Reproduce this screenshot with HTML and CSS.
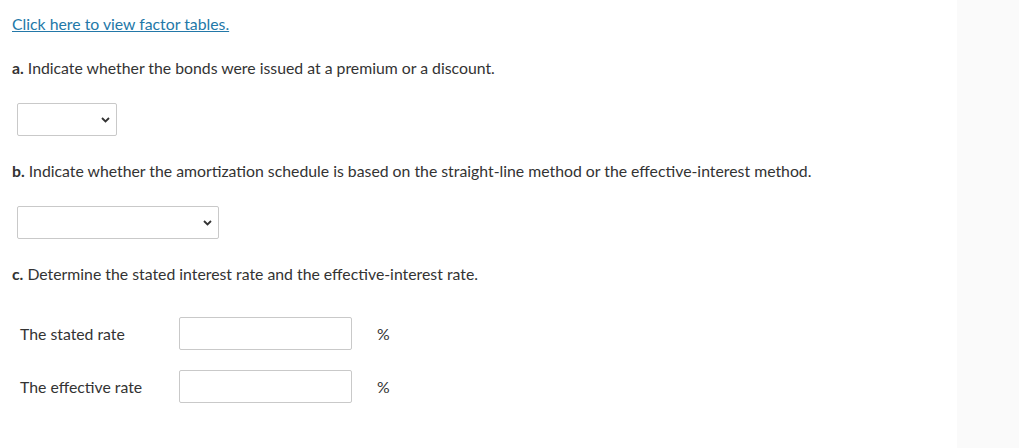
FILE: index.html
```html
<!DOCTYPE html>
<html>
<head>
<meta charset="utf-8">
<link rel="stylesheet" href="styles.css">
</head>
<body>
<div class="page">
  <main class="content">
    <p class="line"><a class="factor-link" href="#">Click here to view factor tables.</a></p>

    <p class="line question"><b>a.</b> Indicate whether the bonds were issued at a premium or a discount.</p>
    <div class="field">
      <select class="dropdown dropdown-sm"><option></option></select>
    </div>

    <p class="line question"><b>b.</b> Indicate whether the amortization schedule is based on the straight-line method or the effective-interest method.</p>
    <div class="field">
      <select class="dropdown dropdown-lg"><option></option></select>
    </div>

    <p class="line question"><b>c.</b> Determine the stated interest rate and the effective-interest rate.</p>
    <div class="rates">
      <div class="rate-row">
        <span class="rate-label">The stated rate</span>
        <input class="rate-input" type="text">
        <span class="unit">%</span>
      </div>
      <div class="rate-row">
        <span class="rate-label">The effective rate</span>
        <input class="rate-input" type="text">
        <span class="unit">%</span>
      </div>
    </div>
  </main>
  <aside class="sidebar"></aside>
</div>
</body>
</html>
```
FILE: styles.css
```css
html, body {
  margin: 0;
  padding: 0;
  background: #ffffff;
}
body {
  font-family: Lato, "Open Sans", sans-serif;
  font-size: 15.8px;
  color: #333333;
}
.page {
  display: flex;
  height: 448px;
}
.content {
  flex: 1;
  padding: 14px 0 0 12px;
}
.sidebar {
  width: 62px;
  background: #fafafa;
}
.line {
  margin: 0;
  line-height: 20px;
}
.factor-link {
  color: #2378a8;
  text-decoration: underline;
}
.question {
  margin-top: 24px;
}
.question b {
  font-weight: 700;
}
.field {
  margin: 25px 0 25px 5px;
  height: 33px;
}
.dropdown {
  appearance: none;
  -webkit-appearance: none;
  box-sizing: border-box;
  height: 33px;
  margin: 0;
  border: 1px solid #c9c9c9;
  border-radius: 2px;
  background-color: #ffffff;
  background-image: url("data:image/svg+xml,%3Csvg xmlns='http://www.w3.org/2000/svg' width='9' height='6' viewBox='0 0 9 6'%3E%3Cpath d='M1 1l3.5 3.5L8 1' fill='none' stroke='%23333' stroke-width='1.8'/%3E%3C/svg%3E");
  background-repeat: no-repeat;
  background-position: right 6px center;
  display: block;
}
.dropdown-sm { width: 100px; }
.dropdown-lg { width: 202px; }
.field + .question {
  margin-top: 0;
}
.rates {
  margin-top: 33px;
  display: flex;
  flex-direction: column;
  gap: 20px;
  padding-left: 8px;
}
.rate-row {
  display: flex;
  align-items: center;
  height: 33px;
}
.rate-label {
  width: 159px;
  line-height: 20px;
}
.rate-input {
  box-sizing: border-box;
  width: 173px;
  height: 33px;
  margin: 0;
  border: 1px solid #c9c9c9;
  border-radius: 2px;
  background: #ffffff;
  padding: 0 6px;
  font: inherit;
}
.unit {
  margin-left: 25px;
  line-height: 20px;
}
```
